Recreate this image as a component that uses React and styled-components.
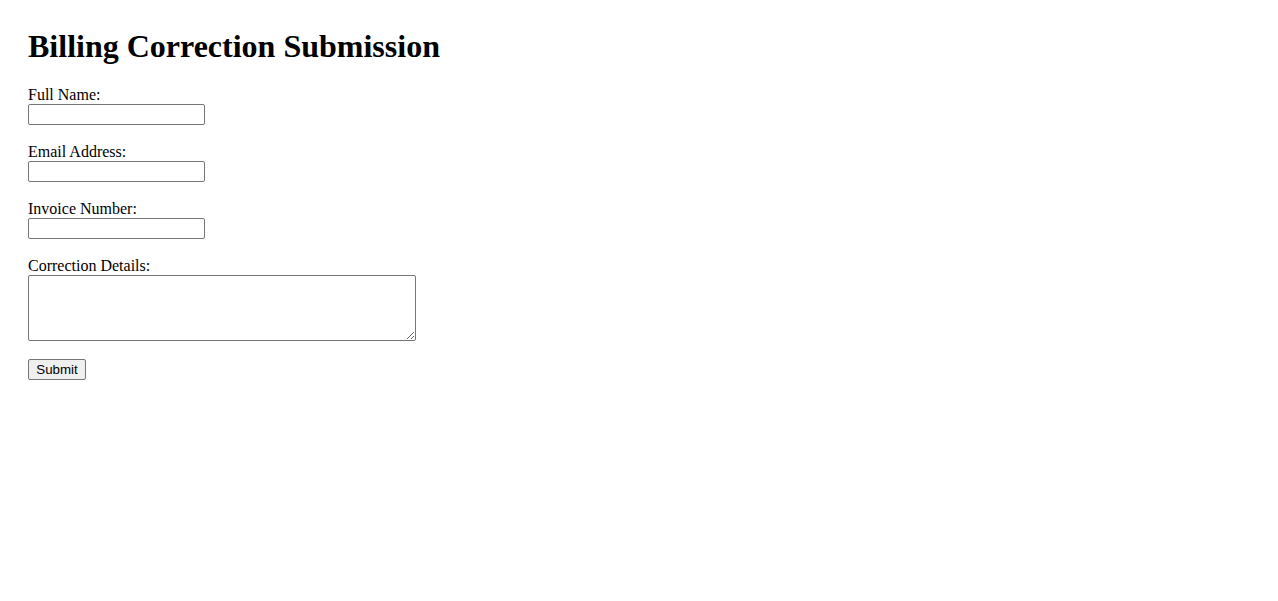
import React from 'react'
import styled, { createGlobalStyle } from 'styled-components'

const GlobalStyle = createGlobalStyle`
body {
    margin: 8px;
    background: #ffffff;
    color: #000000;
    font-family: "Liberation Serif", "Times New Roman", serif;
    font-size: 16px;
}
`

function App() {
    return (
        <>
            <GlobalStyle />
            <Page>
                <Title>Billing Correction Submission</Title>
                <Form onSubmit={(e) => e.preventDefault()}>
                    <Field>
                        <Label htmlFor="fullName">Full Name:</Label>
                        <TextInput id="fullName" type="text" />
                    </Field>
                    <Field>
                        <Label htmlFor="email">Email Address:</Label>
                        <TextInput id="email" type="email" />
                    </Field>
                    <Field>
                        <Label htmlFor="invoice">Invoice Number:</Label>
                        <TextInput id="invoice" type="text" />
                    </Field>
                    <Field>
                        <Label htmlFor="details">Correction Details:</Label>
                        <Details id="details" />
                    </Field>
                    <SubmitButton type="submit">Submit</SubmitButton>
                </Form>
            </Page>
        </>
    )
}

export default App

const Page = styled.div`
padding: 20px;
`

const Title = styled.h1`
margin: 0 0 21px;
font-size: 32px;
font-weight: bold;
line-height: 37px;
`

const Form = styled.form`
display: flex;
flex-direction: column;
align-items: flex-start;
`

const Field = styled.div`
display: flex;
flex-direction: column;
align-items: flex-start;
margin-bottom: 18px;
`

const Label = styled.label`
line-height: 18px;
`

const TextInput = styled.input`
box-sizing: border-box;
width: 177px;
height: 21px;
margin: 0;
padding: 1px 2px;
border: 1px solid #767676;
border-radius: 2px;
font-family: "Liberation Sans", Arial, sans-serif;
font-size: 13.33px;
`

const Details = styled.textarea`
box-sizing: border-box;
width: 388px;
height: 66px;
margin: 0;
padding: 2px;
border: 1px solid #767676;
border-radius: 2px;
font-family: "Liberation Mono", monospace;
font-size: 13.33px;
`

const SubmitButton = styled.button`
box-sizing: border-box;
width: 58px;
height: 21px;
margin: 0;
padding: 1px 6px;
background: #efefef;
border: 1px solid #767676;
border-radius: 2px;
color: #000000;
font-family: "Liberation Sans", Arial, sans-serif;
font-size: 13.33px;
cursor: pointer;
`
